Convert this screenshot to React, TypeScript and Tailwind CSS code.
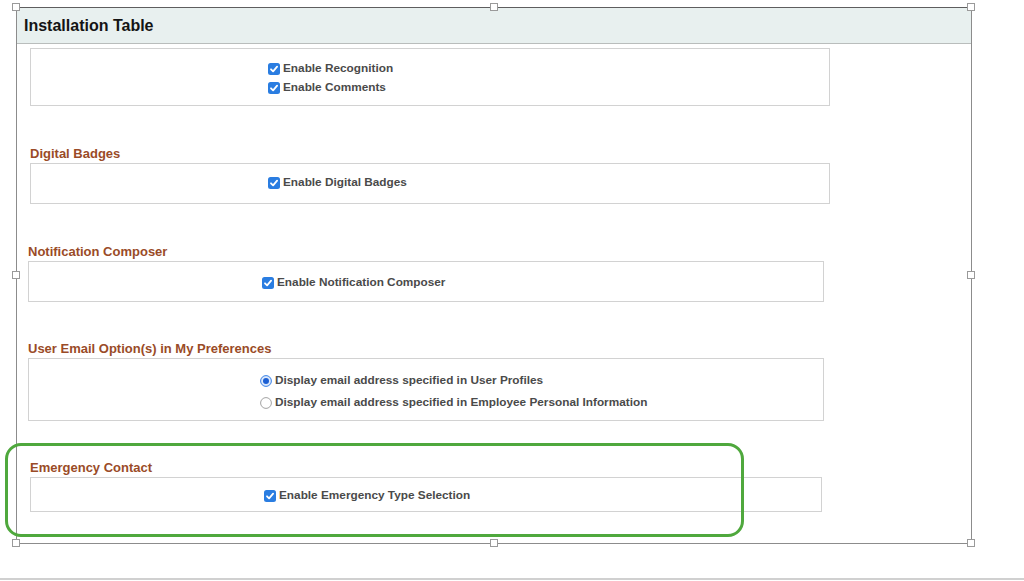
import React from "react";

function Check() {
  return (
    <svg width="12" height="12" viewBox="0 0 12 12" className="shrink-0">
      <rect x="0" y="0" width="12" height="12" rx="2.5" fill="#2a7de1" />
      <path d="M3 6.3 L5.1 8.4 L9.1 3.7" stroke="#ffffff" strokeWidth="1.8" fill="none" strokeLinecap="round" strokeLinejoin="round" />
    </svg>
  );
}

function Radio({ on }: { on: boolean }) {
  return (
    <svg width="12" height="12" viewBox="0 0 12 12" className="shrink-0">
      <circle cx="6" cy="6" r="5.4" fill={on ? "#dbe8fb" : "#ffffff"} stroke={on ? "#3b82e6" : "#a3a3a3"} strokeWidth="1" />
      {on && <circle cx="6" cy="6" r="3" fill="#1c5fd3" />}
    </svg>
  );
}

function Row({ children, label, gap }: { children: React.ReactNode; label: string; gap: string }) {
  return (
    <div className={`flex items-center ${gap} h-[19px]`}>
      {children}
      <span className="text-[11.8px] font-bold text-[#4a4a4a] leading-[19px] whitespace-nowrap">{label}</span>
    </div>
  );
}

function Handle({ cls }: { cls: string }) {
  return <div className={`absolute w-[8px] h-[8px] bg-white border border-[#9a9a9a] ${cls}`} />;
}

const titleCls = "h-[16px] leading-[18px] text-[13px] font-bold text-[#9a4b27] whitespace-nowrap";
const boxCls = "border border-[#d2d2d2] bg-white";

export default function App() {
  return (
    <div className="relative w-[1024px] h-[581px] bg-white flex flex-col overflow-hidden font-['Liberation_Sans',Arial,sans-serif]">
      <div className="ml-[16px] mt-[7px] w-[956px] h-[537px] border border-[#8c8c8c] border-t-[#5e5e5e] flex flex-col">
        <div className="h-[36px] shrink-0 bg-[#e8f0ef] border-b border-[#b9bdbc] flex items-center pl-[7px]">
          <span className="text-[16px] font-bold text-[#141414]">Installation Table</span>
        </div>
        <div className="flex-1 overflow-hidden flex flex-col">
          {/* Section 1 (title scrolled away under the header) */}
          <div className="ml-[13px] mt-[4px]">
            <div className={`${boxCls} w-[800px] h-[58px] pt-[10px] pl-[237px]`}>
              <Row label="Enable Recognition" gap="gap-[3px]"><Check /></Row>
              <Row label="Enable Comments" gap="gap-[3px]"><Check /></Row>
            </div>
          </div>

          {/* Digital Badges */}
          <div className="ml-[13px] mt-[39px]">
            <div className={`${titleCls} mb-[2px]`}>Digital Badges</div>
            <div className={`${boxCls} w-[800px] h-[41px] pt-[9px] pl-[237px]`}>
              <Row label="Enable Digital Badges" gap="gap-[3px]"><Check /></Row>
            </div>
          </div>

          {/* Notification Composer */}
          <div className="ml-[11px] mt-[39px]">
            <div className={`${titleCls} mb-[2px]`}>Notification Composer</div>
            <div className={`${boxCls} w-[796px] h-[41px] pt-[11px] pl-[233px]`}>
              <Row label="Enable Notification Composer" gap="gap-[3px]"><Check /></Row>
            </div>
          </div>

          {/* User Email Options */}
          <div className="ml-[11px] mt-[38px]">
            <div className={`${titleCls} mb-[2px]`}>User Email Option(s) in My Preferences</div>
            <div className={`${boxCls} w-[796px] h-[63px] pt-[11px] pl-[231px]`}>
              <div className="flex items-center gap-[3px] h-[22px]">
                <Radio on={true} />
                <span className="text-[11.8px] font-bold text-[#4a4a4a] whitespace-nowrap">Display email address specified in User Profiles</span>
              </div>
              <div className="flex items-center gap-[3px] h-[22px]">
                <Radio on={false} />
                <span className="text-[11.8px] font-bold text-[#4a4a4a] whitespace-nowrap">Display email address specified in Employee Personal Information</span>
              </div>
            </div>
          </div>

          {/* Emergency Contact */}
          <div className="ml-[13px] mt-[38px]">
            <div className={`${titleCls} mb-[2px]`}>Emergency Contact</div>
            <div className={`${boxCls} w-[792px] h-[35px] pt-[8px] pl-[233px]`}>
              <Row label="Enable Emergency Type Selection" gap="gap-[3px]"><Check /></Row>
            </div>
          </div>
        </div>
      </div>

      <div className="mt-auto mb-[1px] h-[2px] bg-[#d0d0d0]" />

      {/* highlight annotation */}
      <div className="absolute left-[5px] top-[443px] w-[739px] h-[94px] border-[3px] border-[#4fa83d] rounded-[16px]" />

      {/* selection handles */}
      <Handle cls="left-[12px] top-[3px]" />
      <Handle cls="left-[490px] top-[3px]" />
      <Handle cls="left-[967px] top-[3px]" />
      <Handle cls="left-[12px] top-[271px]" />
      <Handle cls="left-[967px] top-[271px]" />
      <Handle cls="left-[12px] top-[539px]" />
      <Handle cls="left-[490px] top-[539px]" />
      <Handle cls="left-[967px] top-[539px]" />
    </div>
  );
}
